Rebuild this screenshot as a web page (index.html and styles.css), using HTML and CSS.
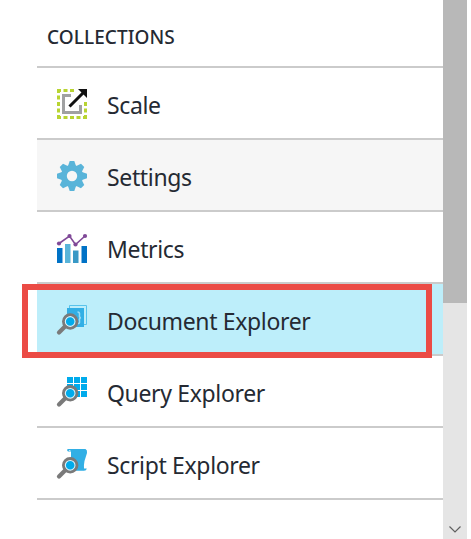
FILE: index.html
```html
<!DOCTYPE html>
<html lang="en">
<head>
<meta charset="utf-8">
<title>Collections</title>
<link rel="stylesheet" href="styles.css">
</head>
<body>
<div class="blade">
  <main class="panel">
    <h2 class="title"><span>COLLECTIONS</span></h2>
    <ul class="menu">
      <li class="item">
        <svg class="icon" viewBox="0 0 30 30">
          <path d="M0 1.5H17M1.500 0V30M0 28.500H30M28.500 30V12" fill="none" stroke="#b8d432" stroke-width="3" stroke-dasharray="4 2.500"/>
          <path d="M14 6.500H6.500V23.500H23.500V16" fill="none" stroke="#a0a1a2" stroke-width="3"/>
          <path d="M12.500 17.500L26 4" stroke="#111" stroke-width="3"/>
          <path d="M21 0H30V9Z" fill="#111"/>
        </svg>
        <span class="label">Scale</span>
      </li>
      <li class="item hover">
        <svg class="icon" viewBox="0 0 30 30">
          <g fill="#59b4d9">
            <path d="M11 5L12.700 0H17.300L19 5V25L17.300 30H12.700L11 25Z"/>
            <path d="M11 5L12.700 0H17.300L19 5V25L17.300 30H12.700L11 25Z" transform="rotate(45 15 15)"/>
            <path d="M11 5L12.700 0H17.300L19 5V25L17.300 30H12.700L11 25Z" transform="rotate(90 15 15)"/>
            <path d="M11 5L12.700 0H17.300L19 5V25L17.300 30H12.700L11 25Z" transform="rotate(135 15 15)"/>
            <circle cx="15" cy="15" r="11"/>
          </g>
          <circle cx="15" cy="15" r="5.200" fill="#f6f6f6"/>
        </svg>
        <span class="label">Settings</span>
      </li>
      <li class="item">
        <svg class="icon" viewBox="0 0 30 30">
          <path d="M0 15H5.500V30H0Z" fill="#0072c6"/>
          <path d="M8 11H13.500V30H8Z" fill="#59b4d9"/>
          <path d="M16 17.500H21.500V30H16Z" fill="#3999c6"/>
          <path d="M24.500 13H30V30H24.500Z" fill="#0072c6"/>
          <path d="M2 10.500L12.500 3L18.500 11.500L28 3" fill="none" stroke="#804998" stroke-width="1.600"/>
          <g fill="#804998"><circle cx="2" cy="10.500" r="2.100"/><circle cx="12.500" cy="3" r="2.100"/><circle cx="18.500" cy="11.500" r="2.100"/><circle cx="28" cy="3" r="2.100"/></g>
        </svg>
        <span class="label">Metrics</span>
      </li>
      <li class="item selected">
        <svg class="icon" viewBox="0 0 30 30">
          <path d="M12.500 3V.5H29.500V19.500H27" fill="none" stroke="#59c3eb"/>
          <path d="M10 3H27V22H10Z" fill="#32afe5"/>
          <path d="M20.500 7Q23 7 22.500 10T24 12.500Q22 13 22.500 16T20 18.500" fill="none" stroke="#9adcf5" stroke-width="1.500"/>
          <path d="M8.500 21L2 27.500" stroke="#7a7a7a" stroke-width="4.200" stroke-linecap="round"/>
          <circle cx="13.200" cy="16.500" r="5" fill="#00abec" stroke="#d8f3fc" stroke-width="1.400"/>
          <circle cx="13.200" cy="16.500" r="6.800" fill="none" stroke="#7a7a7a" stroke-width="2.800"/>
        </svg>
        <span class="label">Document Explorer</span>
      </li>
      <li class="item">
        <svg class="icon" viewBox="0 0 30 30">
          <path d="M10 0H16V6H10ZM17 0H23V6H17ZM24 0H30V6H24ZM10 7H16V13H10ZM17 7H23V13H17ZM24 7H30V13H24ZM10 14H16V20H10ZM17 14H23V20H17ZM24 14H30V20H24Z" fill="#00abec"/>
          <path d="M8.500 21L2 27.500" stroke="#7a7a7a" stroke-width="4.200" stroke-linecap="round"/>
          <circle cx="13.200" cy="16.300" r="5" fill="#00abec" stroke="#d8f3fc" stroke-width="1.400"/>
          <circle cx="13.200" cy="16.300" r="6.800" fill="none" stroke="#7a7a7a" stroke-width="2.800"/>
        </svg>
        <span class="label">Query Explorer</span>
      </li>
      <li class="item">
        <svg class="icon" viewBox="0 0 30 30">
          <path d="M10.500 0H28.500Q30.500 1 30 4L27.500 12Q26.500 17 27 19.500H29.800Q29.500 21.700 27 21.700H14V2.500H11Q9.500 1.500 10.500 0Z" fill="#32afe5"/>
          <path d="M11.500 1H13.300V2.200Z" fill="#fff"/>
          <path d="M8.500 21L2 27.500" stroke="#7a7a7a" stroke-width="4.200" stroke-linecap="round"/>
          <circle cx="13.200" cy="16.300" r="5" fill="#00abec" stroke="#d8f3fc" stroke-width="1.400"/>
          <circle cx="13.200" cy="16.300" r="6.800" fill="none" stroke="#7a7a7a" stroke-width="2.800"/>
        </svg>
        <span class="label">Script Explorer</span>
      </li>
    </ul>
  </main>
  <div class="scrollbar">
    <div class="thumb"></div>
    <svg class="down" viewBox="0 0 12 7"><path d="M.5 .5L6 6L11.500 .5" fill="none" stroke="#606060" stroke-width="1.200"/></svg>
  </div>
  <div class="callout"></div>
</div>
</body>
</html>
```
FILE: styles.css
```css
* { box-sizing: border-box; }
body {
  margin: 0;
  background: #fff;
  color: #252a33;
  font-family: "Noto Sans", "Open Sans", sans-serif;
}
.blade {
  position: relative;
  display: flex;
  width: 467px;
  height: 539px;
  overflow: hidden;
}
.panel { flex: 1; padding-left: 37px; }
.title {
  display: flex;
  align-items: center;
  height: 68px;
  margin: 0;
  padding: 8px 0 0 10px;
  border-bottom: 2px solid #cbcbcb;
  font-size: 19px;
  font-weight: 500;
  letter-spacing: 0.08px;
}
.menu { margin: 0; padding: 0; list-style: none; }
.item {
  display: flex;
  align-items: center;
  gap: 20px;
  height: 72px;
  padding: 2px 0 0 20px;
  border-bottom: 2px solid #cbcbcb;
}
.hover { background: #f6f6f6; }
.selected { background: #bdeefa; }
.icon { width: 30px; height: 30px; overflow: visible; }
.label {
  padding-top: 2px;
  font-size: 23px;
  line-height: 32px;
  letter-spacing: -0.35px;
  white-space: nowrap;
}
.scrollbar {
  display: flex;
  flex-direction: column;
  align-items: center;
  justify-content: space-between;
  width: 24px;
  padding-bottom: 6px;
  background: #e5e5e5;
}
.thumb { width: 24px; height: 303px; background: #b8b8b8; }
.down { width: 12px; height: 7px; }
.callout {
  position: absolute;
  left: 22px;
  top: 284px;
  width: 410px;
  height: 74px;
  border: 6px solid #eb4b45;
}
```
